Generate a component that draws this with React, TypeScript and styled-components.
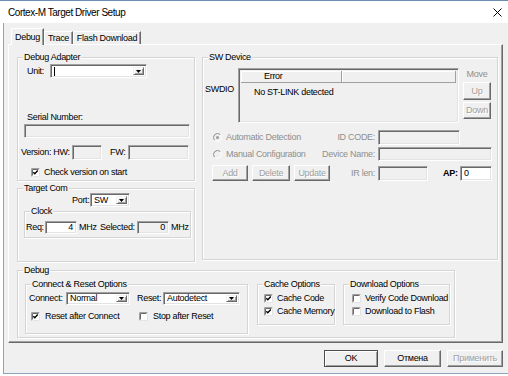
import React from "react";
import styled, { createGlobalStyle, css } from "styled-components";

const GlobalStyle = createGlobalStyle`
  html, body { margin: 0; padding: 0; }
  body {
    background: #ffffff;
    font-family: "Liberation Sans", Arial, sans-serif;
    font-size: 9px;
    line-height: 11px;
    letter-spacing: -0.3px;
    color: #000;
  }
  fieldset, legend, button { font: inherit; letter-spacing: inherit; }
`;

const Window = styled.div`
  width: 508px;
  height: 376px;
  box-sizing: border-box;
  border-top: 1px solid #6e8cb0;
  background: #ffffff;
  display: flex;
  flex-direction: column;
  overflow: hidden;
`;

const TitleBar = styled.div`
  height: 22px;
  flex: none;
  display: flex;
  align-items: center;
  justify-content: space-between;
  padding: 0 6px 0 8px;
  font-size: 10px;
  letter-spacing: -0.45px;
`;

const Client = styled.div`
  flex: 1;
  margin: 0 0 2px 3px;
  border-left: 1px solid #8fa3bb;
  border-bottom: 1px solid #8fa3bb;
  background: #f0f0f0;
  padding: 5px 5px 0 4px;
  display: flex;
  flex-direction: column;
`;

const TabStrip = styled.div`
  display: flex;
  align-items: flex-end;
  height: 17px;
  margin-bottom: -1px;
  padding-left: 3px;
  position: relative;
  z-index: 1;
`;

const Tab = styled.div<{ $w: number; $active?: boolean }>`
  width: ${(p) => p.$w}px;
  box-sizing: border-box;
  display: flex;
  align-items: center;
  justify-content: center;
  background: #f0f0f0;
  border: 1px solid;
  border-bottom: none;
  border-color: #fff #696969 transparent #fff;
  box-shadow: inset -1px 0 0 #a0a0a0;
  ${(p) =>
    p.$active
      ? css`
          height: 17px;
        `
      : css`
          height: 13px;
          margin-bottom: 1px;
        `}
`;

const Panel = styled.div`
  width: 495px;
  height: 299px;
  box-sizing: border-box;
  border: 1px solid;
  border-color: #fff #696969 #696969 #fff;
  box-shadow: inset -1px -1px 0 #a0a0a0;
  padding: 7px 3px 0 8px;
  display: flex;
  flex-direction: column;
`;

const TopRow = styled.div`
  display: flex;
  align-items: flex-start;
  gap: 7px;
`;

const Column = styled.div`
  display: flex;
  flex-direction: column;
  gap: 2px;
`;

const Group = styled.fieldset<{ $w: number; $h: number; $top?: number; $left?: number }>`
  box-sizing: border-box;
  flex: none;
  width: ${(p) => p.$w}px;
  height: ${(p) => p.$h}px;
  margin: ${(p) => p.$top ?? 0}px 0 0 ${(p) => p.$left ?? 0}px;
  padding: 0;
  min-width: 0;
  border: 1px solid #d5d5d5;
  box-shadow: inset 1px 1px 0 #fff, 1px 1px 0 #fff;
`;

const Legend = styled.legend`
  margin-left: 5px;
  padding: 0 1px;
  line-height: 11px;
  background: #f0f0f0;
`;

const Row = styled.div<{ $top?: number; $left?: number; $h?: number; $start?: boolean }>`
  display: flex;
  align-items: ${(p) => (p.$start ? "flex-start" : "center")};
  margin-top: ${(p) => p.$top ?? 0}px;
  padding-left: ${(p) => p.$left ?? 0}px;
  height: ${(p) => (p.$h ? `${p.$h}px` : "auto")};
`;

const Text = styled.span<{
  $w?: number;
  $left?: number;
  $top?: number;
  $muted?: boolean;
  $bold?: boolean;
  $right?: boolean;
}>`
  display: inline-flex;
  flex: none;
  white-space: nowrap;
  justify-content: ${(p) => (p.$right ? "flex-end" : "flex-start")};
  width: ${(p) => (p.$w ? `${p.$w}px` : "auto")};
  margin-left: ${(p) => p.$left ?? 0}px;
  margin-top: ${(p) => p.$top ?? 0}px;
  color: ${(p) => (p.$muted ? "#8f8f8f" : "#000")};
  font-weight: ${(p) => (p.$bold ? 700 : 400)};
`;

const sunken = css`
  box-sizing: border-box;
  border: 1px solid;
  border-color: #a0a0a0 #fff #fff #a0a0a0;
  box-shadow: inset 1px 1px 0 #696969, inset -1px -1px 0 #e3e3e3;
`;

const Field = styled.div<{ $w: number; $h?: number; $left?: number; $top?: number; $white?: boolean; $right?: boolean }>`
  ${sunken};
  flex: none;
  width: ${(p) => p.$w}px;
  height: ${(p) => p.$h ?? 14}px;
  margin-left: ${(p) => p.$left ?? 0}px;
  margin-top: ${(p) => p.$top ?? 0}px;
  background: ${(p) => (p.$white ? "#fff" : "#f0f0f0")};
  display: flex;
  align-items: center;
  justify-content: ${(p) => (p.$right ? "flex-end" : "flex-start")};
  padding: 0 3px;
`;

const Combo = styled.div<{ $w: number; $h?: number; $left?: number }>`
  ${sunken};
  flex: none;
  width: ${(p) => p.$w}px;
  height: ${(p) => p.$h ?? 14}px;
  margin-left: ${(p) => p.$left ?? 0}px;
  background: #fff;
  display: flex;
  align-items: stretch;
  padding: 1px 2px 1px 1px;
`;

const ComboValue = styled.span`
  flex: 1;
  display: flex;
  align-items: center;
  padding-left: 2px;
  line-height: 9px;
  white-space: nowrap;
`;

const Caret = styled.span`
  width: 1px;
  height: 9px;
  background: #000;
`;

const ComboArrow = styled.span`
  width: 11px;
  margin: 1px 0;
  box-sizing: border-box;
  display: flex;
  align-items: center;
  justify-content: center;
  background: #f0f0f0;
  border: 1px solid;
  border-color: #f0f0f0 #696969 #696969 #f0f0f0;
  box-shadow: inset 1px 1px 0 #fff, inset -1px -1px 0 #a0a0a0;
`;

const Button = styled.button<{ $w: number; $h?: number; $left?: number; $top?: number; $disabled?: boolean; $default?: boolean }>`
  box-sizing: border-box;
  flex: none;
  width: ${(p) => p.$w}px;
  height: ${(p) => p.$h ?? 17}px;
  margin: ${(p) => p.$top ?? 0}px 0 0 ${(p) => p.$left ?? 0}px;
  padding: 0;
  display: flex;
  align-items: center;
  justify-content: center;
  background: #f0f0f0;
  border: 1px solid;
  border-color: #fff #696969 #696969 #fff;
  box-shadow: inset -1px -1px 0 #a0a0a0;
  color: ${(p) => (p.$disabled ? "#a0a0a0" : "#000")};
  text-shadow: ${(p) => (p.$disabled ? "1px 1px 0 #fff" : "none")};
  ${(p) =>
    p.$default &&
    css`
      border-color: #4d4d4d;
      box-shadow: inset 1px 1px 0 #fff, inset -1px -1px 0 #a0a0a0;
    `}
`;

const List = styled.div`
  ${sunken};
  width: 221px;
  height: 55px;
  flex: none;
  padding: 2px;
  background: #f0f0f0;
  display: flex;
  flex-direction: column;
`;

const ListHeader = styled.div`
  display: flex;
  height: 12px;
  flex: none;
`;

const HeaderCell = styled.div<{ $w?: number }>`
  box-sizing: border-box;
  ${(p) => (p.$w ? `width: ${p.$w}px;` : "flex: 1;")}
  height: 12px;
  display: flex;
  align-items: center;
  padding-left: 23px;
  border-right: 1px solid #a0a0a0;
  border-bottom: 1px solid #a0a0a0;
  box-shadow: inset 1px 1px 0 #fff;
`;

const ListRow = styled.div`
  margin-top: 4px;
  padding-left: 13px;
`;

const MoveColumn = styled.div`
  display: flex;
  flex-direction: column;
  align-items: center;
  width: 28px;
  margin-left: 4px;
`;

const LeftCell = styled.div<{ $pad: number }>`
  width: 127px;
  box-sizing: border-box;
  padding-left: ${(p) => p.$pad}px;
  display: flex;
  align-items: center;
  flex: none;
`;

const ButtonBar = styled.div`
  display: flex;
  justify-content: flex-end;
  gap: 6px;
  margin-top: 7px;
`;

const CheckLine = styled.div<{ $w?: number }>`
  display: flex;
  align-items: center;
  gap: 4px;
  flex: none;
  width: ${(p) => (p.$w ? `${p.$w}px` : "auto")};
`;

function CheckBox({ checked }: { checked?: boolean }) {
  return (
    <svg width="9" height="9" viewBox="0 0 9 9" style={{ flex: "none" }}>
      <rect x="0" y="0" width="9" height="9" fill="#fff" />
      <path d="M0.5 8.5V0.5H8.5" stroke="#a0a0a0" fill="none" />
      <path d="M1.5 7.5V1.5H7.5" stroke="#696969" fill="none" />
      <path d="M1.5 8.5H8.5V1.5" stroke="#e3e3e3" fill="none" />
      {checked && <path d="M2.3 4.2L3.8 5.8L6.8 2.6" stroke="#000" strokeWidth="1.4" fill="none" />}
    </svg>
  );
}

function Radio({ checked }: { checked?: boolean }) {
  return (
    <svg width="9" height="9" viewBox="0 0 9 9" style={{ flex: "none" }}>
      <circle cx="4.5" cy="4.5" r="4" fill="#f0f0f0" />
      <path d="M1.67 7.33A4 4 0 0 1 7.33 1.67" stroke="#8a8a8a" fill="none" />
      <path d="M7.33 1.67A4 4 0 0 1 1.67 7.33" stroke="#fff" fill="none" />
      {checked && <circle cx="4.5" cy="4.5" r="1.5" fill="#9a9a9a" />}
    </svg>
  );
}

function Arrow() {
  return (
    <svg width="5" height="3" viewBox="0 0 5 3">
      <path d="M0 0H5L2.5 3Z" fill="#000" />
    </svg>
  );
}

function DropDown({ w, h, left, value, caret }: { w: number; h?: number; left?: number; value?: string; caret?: boolean }) {
  return (
    <Combo $w={w} $h={h} $left={left}>
      <ComboValue>{caret ? <Caret /> : value}</ComboValue>
      <ComboArrow>
        <Arrow />
      </ComboArrow>
    </Combo>
  );
}

export default function App() {
  return (
    <>
      <GlobalStyle />
      <Window>
        <TitleBar>
          <span>Cortex-M Target Driver Setup</span>
          <svg width="9" height="9" viewBox="0 0 9 9">
            <path d="M0.5 0.5L8.5 8.5M8.5 0.5L0.5 8.5" stroke="#000" strokeWidth="1" />
          </svg>
        </TitleBar>
        <Client>
          <TabStrip>
            <Tab $w={33} $active>Debug</Tab>
            <Tab $w={29}>Trace</Tab>
            <Tab $w={68}>Flash Download</Tab>
          </TabStrip>
          <Panel>
            <TopRow>
              <Column>
                <Group $w={178} $h={129}>
                  <Legend>Debug Adapter</Legend>
                  <Row $top={1} $left={9} $h={14}>
                    <Text $w={23}>Unit:</Text>
                    <DropDown w={97} caret />
                  </Row>
                  <Row $top={34} $left={9}>
                    <Text>Serial Number:</Text>
                  </Row>
                  <Field $w={166} $h={14} $left={6} $top={1} />
                  <Row $top={7} $left={3} $h={15}>
                    <Text $w={51}>Version: HW:</Text>
                    <Field $w={30} $h={15} />
                    <Text $w={18} $left={8}>FW:</Text>
                    <Field $w={61} $h={15} />
                  </Row>
                  <Row $top={7} $left={13} $h={10}>
                    <CheckLine>
                      <CheckBox checked />
                      <Text>Check version on start</Text>
                    </CheckLine>
                  </Row>
                </Group>
                <Group $w={178} $h={79}>
                  <Legend>Target Com</Legend>
                  <Row $top={-1} $left={54} $h={14}>
                    <Text $w={18}>Port:</Text>
                    <DropDown w={40} value="SW" />
                  </Row>
                  <Group $w={167} $h={32} $top={-1} $left={6}>
                    <Legend>Clock</Legend>
                    <Row $top={4} $h={13}>
                      <Text $w={19} $left={1}>Req:</Text>
                      <Field $w={32} $h={13} $white $right>4</Field>
                      <Text $w={21} $left={2}>MHz</Text>
                      <Text $w={37}>Selected:</Text>
                      <Field $w={32} $h={13} $right>0</Field>
                      <Text $left={2}>MHz</Text>
                    </Row>
                  </Group>
                </Group>
              </Column>
              <Group $w={296} $h={208}>
                <Legend>SW Device</Legend>
                <Row $top={5} $start>
                  <Text $w={33} $left={2} $top={16}>SWDIO</Text>
                  <List>
                    <ListHeader>
                      <HeaderCell $w={101}>Error</HeaderCell>
                      <HeaderCell />
                    </ListHeader>
                    <ListRow>No ST-LINK detected</ListRow>
                  </List>
                  <MoveColumn>
                    <Text $muted $top={1}>Move</Text>
                    <Button $w={28} $h={18} $top={2} $disabled>Up</Button>
                    <Button $w={28} $h={17} $top={2} $disabled>Down</Button>
                  </MoveColumn>
                </Row>
                <Row $top={7} $h={15}>
                  <LeftCell $pad={10}>
                    <Radio checked />
                    <Text $left={4} $muted>Automatic Detection</Text>
                  </LeftCell>
                  <Text $w={45} $right $muted>ID CODE:</Text>
                  <Field $w={82} $h={15} $left={3} />
                </Row>
                <Row $top={2} $h={14}>
                  <LeftCell $pad={10}>
                    <Radio />
                    <Text $left={4} $muted>Manual Configuration</Text>
                  </LeftCell>
                  <Text $w={45} $right $muted>Device Name:</Text>
                  <Field $w={114} $h={14} $left={3} />
                </Row>
                <Row $top={4} $h={16}>
                  <LeftCell $pad={9}>
                    <Button $w={36} $h={16} $disabled>Add</Button>
                    <Button $w={38} $h={16} $left={4} $disabled>Delete</Button>
                    <Button $w={36} $h={16} $left={4} $disabled>Update</Button>
                  </LeftCell>
                  <Text $w={45} $right $muted>IR len:</Text>
                  <Field $w={50} $h={15} $left={3} />
                  <Text $w={17} $left={15} $bold>AP:</Text>
                  <Field $w={32} $h={15} $white>0</Field>
                </Row>
              </Group>
            </TopRow>
            <Group $w={438} $h={73} $top={3}>
              <Legend>Debug</Legend>
              <Row $top={3} $left={7} $start>
                <Group $w={223} $h={55}>
                  <Legend>Connect &amp; Reset Options</Legend>
                  <Row $top={2} $left={3} $h={13}>
                    <Text $w={37}>Connect:</Text>
                    <DropDown w={64} h={13} value="Normal" />
                    <Text $w={26} $left={7}>Reset:</Text>
                    <DropDown w={77} h={13} value="Autodetect" />
                  </Row>
                  <Row $top={6} $left={5} $h={10}>
                    <CheckLine $w={108}>
                      <CheckBox checked />
                      <Text $left={1}>Reset after Connect</Text>
                    </CheckLine>
                    <CheckLine>
                      <CheckBox />
                      <Text $left={1}>Stop after Reset</Text>
                    </CheckLine>
                  </Row>
                </Group>
                <Group $w={78} $h={46} $left={9}>
                  <Legend>Cache Options</Legend>
                  <Row $top={4} $left={6} $h={9}>
                    <CheckLine>
                      <CheckBox checked />
                      <Text>Cache Code</Text>
                    </CheckLine>
                  </Row>
                  <Row $top={4} $left={6} $h={9}>
                    <CheckLine>
                      <CheckBox checked />
                      <Text>Cache Memory</Text>
                    </CheckLine>
                  </Row>
                </Group>
                <Group $w={107} $h={46} $left={8}>
                  <Legend>Download Options</Legend>
                  <Row $top={4} $left={8} $h={9}>
                    <CheckLine>
                      <CheckBox />
                      <Text>Verify Code Download</Text>
                    </CheckLine>
                  </Row>
                  <Row $top={4} $left={8} $h={9}>
                    <CheckLine>
                      <CheckBox />
                      <Text>Download to Flash</Text>
                    </CheckLine>
                  </Row>
                </Group>
              </Row>
            </Group>
          </Panel>
          <ButtonBar>
            <Button $w={54} $default>OK</Button>
            <Button $w={57}>Отмена</Button>
            <Button $w={56} $disabled>Применить</Button>
          </ButtonBar>
        </Client>
      </Window>
    </>
  );
}
